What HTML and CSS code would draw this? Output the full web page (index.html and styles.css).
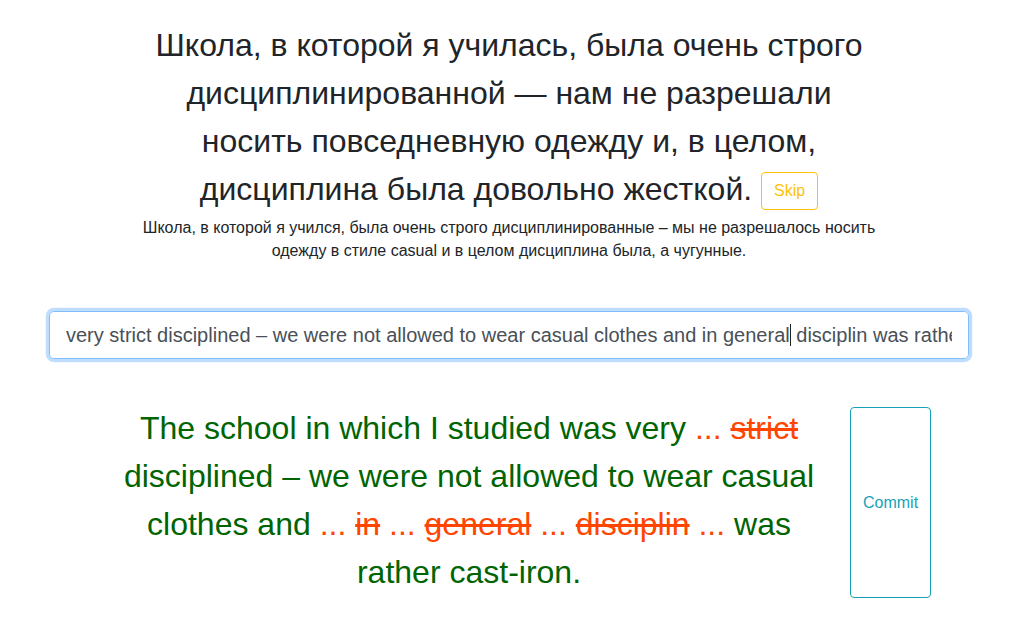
FILE: index.html
```html
<!DOCTYPE html>
<html lang="ru">
<head>
<meta charset="utf-8">
<title>Translate</title>
<link rel="stylesheet" href="styles.css">
</head>
<body>
<div class="page">
  <div class="prompt">
    <h2 class="source">Школа, в которой я училась, была очень строго дисциплинированной — нам не разрешали носить повседневную одежду и, в целом, дисциплина была довольно жесткой. <button class="btn-skip">Skip</button></h2>
    <p class="machine">Школа, в которой я учился, была очень строго дисциплинированные – мы не разрешалось носить одежду в стиле casual и в целом дисциплина была, а чугунные.</p>
  </div>
  <div class="answer-input"><span class="answer-clip"><span class="answer-value">very strict disciplined – we were not allowed to wear casual clothes and in general<span class="caret"></span> disciplin was rather cast-iron.</span></span></div>
  <div class="result">
    <p class="result-text"><span class="ok">The school in which I studied was very</span> <span class="gap">...</span> <s class="bad">strict</s> <span class="ok">disciplined – we were not allowed to wear casual clothes and</span> <span class="gap">...</span> <s class="bad">in</s> <span class="gap">...</span> <s class="bad">general</s> <span class="gap">...</span> <s class="bad">disciplin</s> <span class="gap">...</span> <span class="ok">was rather cast-iron.</span></p>
    <button class="btn-commit">Commit</button>
  </div>
</div>
</body>
</html>
```

FILE: styles.css
```css
* { box-sizing: border-box; }
html, body { margin: 0; padding: 0; background: #fff; }
body {
  font-family: "Liberation Sans", Arial, sans-serif;
  color: #212529;
  font-size: 16px;
  line-height: 1.5;
}
.page { width: 1018px; padding-top: 21px; }
.prompt { width: 740px; margin: 0 auto; text-align: center; }
.source {
  margin: 0;
  font-family: "Liberation Sans Narrow", "Liberation Sans", sans-serif;
  font-weight: 400;
  font-size: 32px;
  line-height: 48px;
  color: #212529;
}
.btn-skip {
  font-family: "Liberation Sans", Arial, sans-serif;
  font-size: 16px;
  line-height: 24px;
  padding: 6px 12px;
  border: 1px solid #ffc107;
  border-radius: 4px;
  background: transparent;
  color: #ffc107;
  vertical-align: 4px;
}
.machine {
  margin: 3px 0 0;
  font-family: "Liberation Sans Narrow", "Liberation Sans", sans-serif;
  font-size: 16px;
  line-height: 23px;
}
.answer-input {
  margin: 49px 49px 0;
  height: 48px;
  padding: 0 16px;
  border: 1px solid #80bdff;
  border-radius: 4.8px;
  box-shadow: 0 0 0 3.2px rgba(0, 123, 255, .25);
  display: flex;
  align-items: center;
  font-size: 20px;
  color: #495057;
}
.answer-clip { display: block; width: 100%; overflow: hidden; white-space: nowrap; line-height: 30px; }
.caret { display: inline-block; width: 1px; height: 22px; background: #222; vertical-align: -4px; }
.result {
  margin: 45px 0 0 109px;
  width: 821px;
  display: flex;
  align-items: flex-start;
  gap: 21px;
}
.result-text {
  flex: 0 0 720px;
  margin: 0;
  text-align: center;
  font-size: 32px;
  line-height: 48px;
}
.ok { color: #006400; }
.gap { color: #ff4500; }
.bad { color: #ff4500; text-decoration: line-through; }
.btn-commit {
  flex: 0 0 80px;
  height: 191px;
  margin-top: 3px;
  font-family: "Liberation Sans", Arial, sans-serif;
  font-size: 16px;
  color: #17a2b8;
  background: transparent;
  border: 1px solid #17a2b8;
  border-radius: 4px;
  padding: 6px 12px;
}
```
